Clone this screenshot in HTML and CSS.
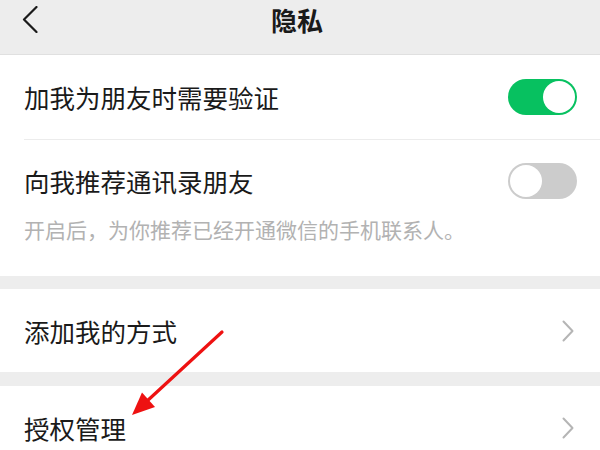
FILE: index.html
```html
<!DOCTYPE html>
<html lang="zh-CN">
<head>
<meta charset="utf-8">
<title>隐私</title>
<link rel="stylesheet" href="styles.css">
</head>
<body>
<div class="page">
  <header class="nav">
    <div class="nav-left">
      <svg class="back" width="16" height="27" viewBox="0 0 16 27"><polyline points="14.5,1 2,13.5 14.5,26" fill="none" stroke="#1a1a1a" stroke-width="2.2" stroke-linecap="round" stroke-linejoin="round"/></svg>
    </div>
    <h1 class="title">隐私</h1>
    <div class="nav-right"></div>
  </header>

  <section class="group">
    <div class="cell">
      <span class="label">加我为朋友时需要验证</span>
      <span class="switch on"><span class="knob"></span></span>
    </div>
    <div class="divider"></div>
    <div class="cell cell-tall">
      <div class="cell-main">
        <span class="label">向我推荐通讯录朋友</span>
        <span class="switch off"><span class="knob"></span></span>
      </div>
      <p class="hint">开启后，为你推荐已经开通微信的手机联系人。</p>
    </div>
  </section>

  <section class="group group-gap1">
    <div class="cell cell-link">
      <span class="label">添加我的方式</span>
      <svg class="chev" width="12" height="22" viewBox="0 0 12 22"><polyline points="1.5,1.5 10.5,11 1.5,20.5" fill="none" stroke="#b5b5b5" stroke-width="2" stroke-linecap="round" stroke-linejoin="round"/></svg>
    </div>
  </section>

  <section class="group group-gap2">
    <div class="cell cell-link">
      <span class="label">授权管理</span>
      <svg class="chev" width="12" height="22" viewBox="0 0 12 22"><polyline points="1.5,1.5 10.5,11 1.5,20.5" fill="none" stroke="#b5b5b5" stroke-width="2" stroke-linecap="round" stroke-linejoin="round"/></svg>
    </div>
  </section>

  <svg class="annotation" width="600" height="450" viewBox="0 0 600 450">
    <line x1="222" y1="332" x2="146" y2="402" stroke="#ee1111" stroke-width="3.2" stroke-linecap="round"/>
    <polygon points="132,415 142,392.5 155,407" fill="#ee1111"/>
  </svg>
</div>
</body>
</html>
```

FILE: styles.css
```css
html, body {
  margin: 0;
  padding: 0;
}

body {
  background: #ededed;
  font-family: "Noto Sans CJK SC", "Noto Sans", sans-serif;
  color: #1a1a1a;
}

.page {
  position: relative;
  width: 600px;
  height: 450px;
  overflow: hidden;
  background: #ededed;
}

.nav {
  display: grid;
  grid-template-columns: 1fr auto 1fr;
  align-items: start;
  height: 55px;
  padding-top: 6px;
  box-sizing: border-box;
  background: #ededed;
  border-bottom: 1px solid #e0e0e0;
}

.nav-left {
  padding-left: 22px;
}

.back {
  display: block;
}

.title {
  margin: 0;
  padding-right: 6px;
  font-size: 26px;
  line-height: 28px;
  font-weight: 700;
  color: #1a1a1a;
}

.group {
  background: #ffffff;
}

.group-gap1 {
  margin-top: 13px;
}

.group-gap2 {
  margin-top: 14px;
}

.cell {
  display: flex;
  align-items: center;
  justify-content: space-between;
  height: 84px;
  padding: 0 23px 0 24px;
  box-sizing: border-box;
}

.cell-link {
  height: 83px;
  padding-right: 26px;
}

.group-gap2 .cell-link {
  height: 84px;
}

.label {
  font-size: 25.5px;
  line-height: 36px;
  color: #1a1a1a;
  letter-spacing: 0;
}

.divider {
  height: 1px;
  margin-left: 24px;
  background: #ececec;
}

.cell-tall {
  display: block;
  height: auto;
  padding: 23px 23px 33px 24px;
}

.cell-main {
  display: flex;
  align-items: center;
  justify-content: space-between;
  height: 36px;
}

.hint {
  margin: 16px 0 0;
  font-size: 21px;
  line-height: 28px;
  color: #b2b2b2;
}

.switch {
  position: relative;
  display: block;
  width: 69px;
  height: 36px;
  border-radius: 18px;
  box-sizing: border-box;
}

.switch.on {
  background: #07c160;
}

.switch.off {
  background: #cccccc;
}

.knob {
  position: absolute;
  top: 2px;
  width: 32px;
  height: 32px;
  border-radius: 50%;
  background: #ffffff;
}

.switch.on .knob {
  right: 2px;
}

.switch.off .knob {
  left: 2px;
}

.chev {
  display: block;
}

.annotation {
  position: absolute;
  top: 0;
  left: 0;
  pointer-events: none;
}
```
